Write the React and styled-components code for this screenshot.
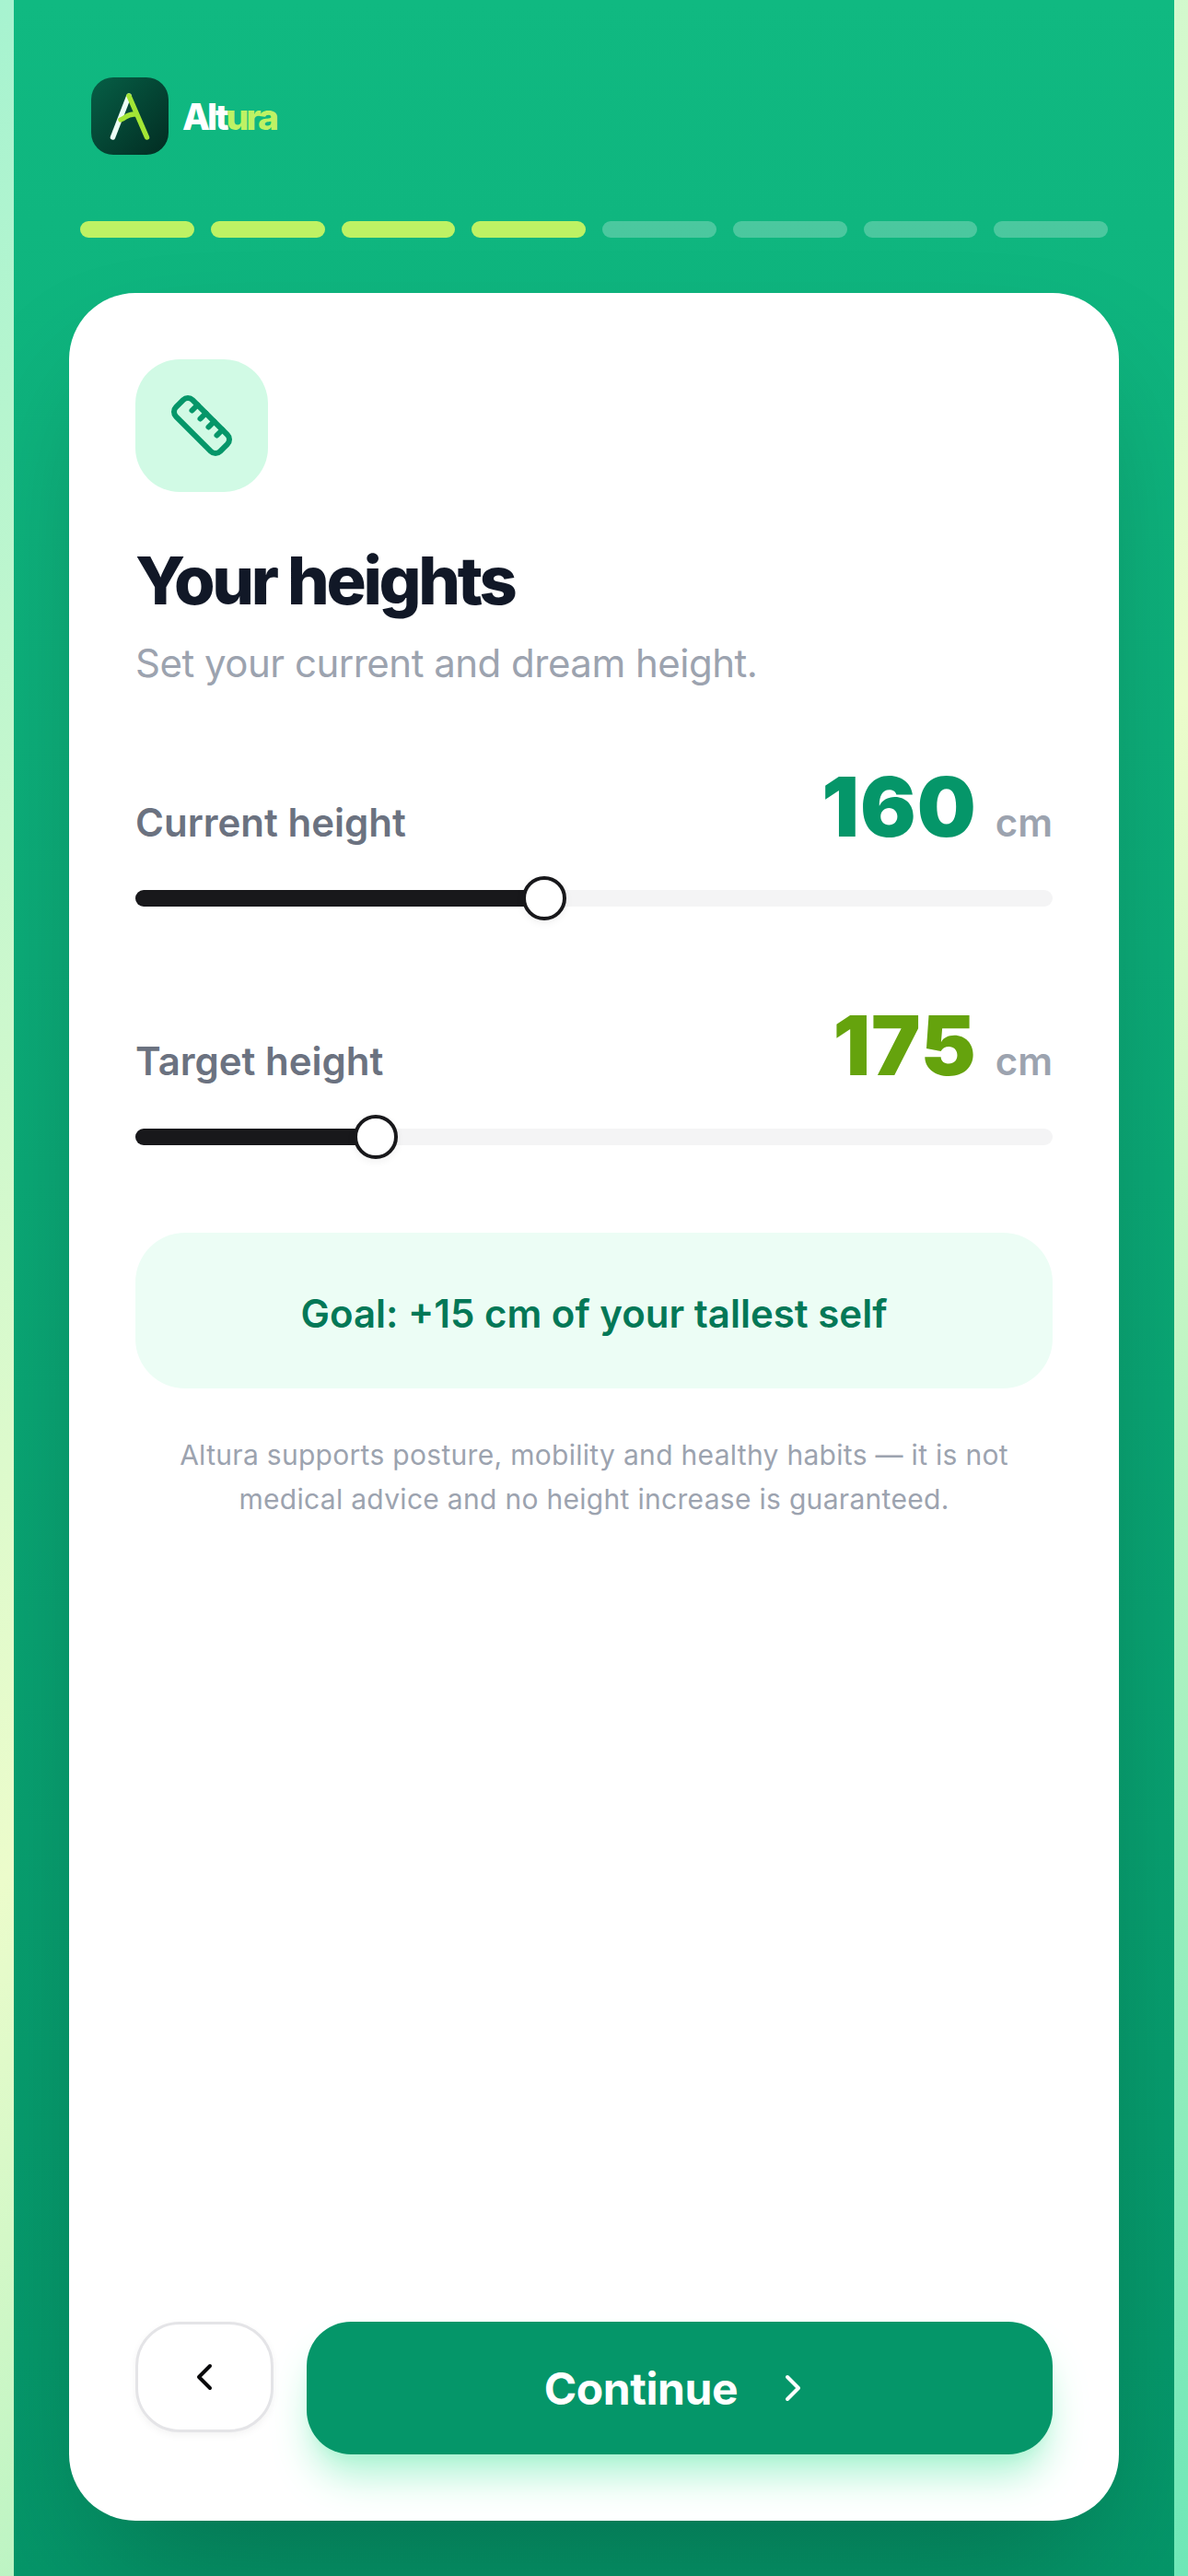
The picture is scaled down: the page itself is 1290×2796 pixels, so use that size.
import React from "react";
import styled, { createGlobalStyle } from "styled-components";
import { ChevronLeft, ChevronRight, Ruler } from "lucide-react";

const Global = createGlobalStyle`
  html, body { margin: 0; padding: 0; }
  body { font-family: Inter, "Noto Sans", sans-serif; -webkit-font-smoothing: antialiased; }
  * { box-sizing: border-box; }
`;

const Page = styled.div`
  width: 1290px;
  height: 2796px;
  padding: 0 15px;
  background: linear-gradient(135deg, #a7f3d0 0%, #ecfccb 50%, #6ee7b7 100%);
`;

const Panel = styled.main`
  height: 100%;
  display: flex;
  flex-direction: column;
  overflow: hidden;
  background: linear-gradient(180deg, #10b981 0%, #059669 100%);
`;

const Brand = styled.header`
  display: flex;
  align-items: center;
  gap: 15px;
  padding: 84px 84px 0;
`;

const LogoTile = styled.div`
  width: 84px;
  height: 84px;
  border-radius: 24px;
  overflow: hidden;
  background: linear-gradient(135deg, #065f46 0%, #022c22 100%);
  svg { display: block; }
`;

const Wordmark = styled.div`
  font-size: 39px;
  font-weight: 800;
  letter-spacing: -3px;
  color: #fff;
  span { color: #bef264; }
`;

const Progress = styled.div`
  display: flex;
  gap: 18px;
  padding: 0 72px;
  margin-top: 72px;
`;

const Segment = styled.div`
  flex: 1;
  height: 18px;
  border-radius: 9px;
  background: ${(p) => (p.$on ? "#bef264" : "rgba(255,255,255,0.25)")};
`;

const Card = styled.section`
  flex: 1;
  display: flex;
  flex-direction: column;
  margin: 60px 60px 60px;
  padding: 72px;
  border-radius: 72px;
  background: #fff;
  box-shadow: 0 75px 150px -36px rgba(0, 0, 0, 0.25);
`;

const IconTile = styled.div`
  width: 144px;
  height: 144px;
  border-radius: 48px;
  background: #d1fae5;
  color: #059669;
  display: flex;
  align-items: center;
  justify-content: center;
`;

const Title = styled.h1`
  margin: 51px 0 0;
  font-size: 72px;
  line-height: 90px;
  font-weight: 800;
  letter-spacing: -3.3px;
  color: #111827;
`;

const Subtitle = styled.p`
  margin: 15px 0 0;
  font-size: 42px;
  line-height: 60px;
  font-weight: 400;
  letter-spacing: -0.5px;
  color: #9ca3af;
`;

const Field = styled.div`
  margin-top: ${(p) => p.$gap}px;
`;

const FieldHead = styled.div`
  display: flex;
  align-items: baseline;
  justify-content: space-between;
`;

const Label = styled.span`
  font-size: 42px;
  font-weight: 600;
  color: #6b7280;
`;

const Reading = styled.span`
  display: inline-flex;
  align-items: baseline;
  gap: 20px;
`;

const Value = styled.span`
  font-size: 90px;
  line-height: 108px;
  font-weight: 900;
  letter-spacing: 1px;
  color: ${(p) => p.$color};
`;

const Unit = styled.span`
  font-size: 42px;
  font-weight: 600;
  color: #9ca3af;
`;

const Track = styled.div`
  position: relative;
  height: 18px;
  margin-top: 36px;
  border-radius: 9px;
  background: #f4f4f5;
`;

const Fill = styled.div`
  height: 100%;
  border-radius: 9px;
  background: #18181b;
`;

const Thumb = styled.div`
  position: absolute;
  top: 50%;
  width: 48px;
  height: 48px;
  border-radius: 50%;
  border: 4px solid #18181b;
  background: #fff;
  transform: translate(-50%, -50%);
  box-shadow: 0 3px 9px rgba(0, 0, 0, 0.06);
`;

const Goal = styled.div`
  margin-top: 95px;
  height: 169px;
  padding-top: 6px;
  border-radius: 54px;
  background: #ecfdf5;
  color: #047857;
  font-size: 42px;
  font-weight: 600;
  display: flex;
  align-items: center;
  justify-content: center;
`;

const Note = styled.p`
  margin: 48px 0 0;
  text-align: center;
  font-size: 30px;
  line-height: 48px;
  letter-spacing: 0.3px;
  color: #9ca3af;
`;

const Actions = styled.div`
  margin-top: auto;
  display: flex;
  align-items: flex-start;
  gap: 36px;
`;

const BackButton = styled.button`
  width: 150px;
  height: 120px;
  flex: none;
  padding: 0;
  border: 3px solid #e4e4e7;
  border-radius: 48px;
  background: #fff;
  color: #09090b;
  display: flex;
  align-items: center;
  justify-content: center;
  box-shadow: 0 3px 9px rgba(0, 0, 0, 0.05);
`;

const ContinueButton = styled.button`
  flex: 1;
  height: 144px;
  border: 0;
  border-radius: 48px;
  background: #059669;
  color: #fff;
  font-family: inherit;
  font-size: 48px;
  font-weight: 700;
  letter-spacing: -0.4px;
  display: flex;
  align-items: center;
  justify-content: center;
  gap: 36px;
  box-shadow: 0 30px 45px -9px #a7f3d0, 0 12px 18px -12px #a7f3d0;
`;

const sliders = [
  { label: "Current height", value: 160, pct: 44.6, color: "#059669", gap: 72 },
  { label: "Target height", value: 175, pct: 26.2, color: "#65a30d", gap: 97 },
];

export default function App() {
  return (
    <Page>
      <Global />
      <Panel>
        <Brand>
          <LogoTile>
            <svg width="84" height="84" viewBox="0 0 84 84" fill="none" strokeLinecap="round">
              <path d="M41 20 L23.5 65" stroke="#ecfdf5" strokeWidth="5.5" />
              <path d="M41 20 L60.5 65" stroke="#a3e635" strokeWidth="5.5" />
              <path d="M32 46 C38 44 39 39 48 40" stroke="#a3e635" strokeWidth="5.5" />
            </svg>
          </LogoTile>
          <Wordmark>
            Alt<span>ura</span>
          </Wordmark>
        </Brand>
        <Progress>
          {[0, 1, 2, 3, 4, 5, 6, 7].map((i) => (
            <Segment key={i} $on={i < 4} />
          ))}
        </Progress>
        <Card>
          <IconTile>
            <Ruler size={72} strokeWidth={2} />
          </IconTile>
          <Title>Your heights</Title>
          <Subtitle>Set your current and dream height.</Subtitle>
          {sliders.map((s) => (
            <Field key={s.label} $gap={s.gap}>
              <FieldHead>
                <Label>{s.label}</Label>
                <Reading>
                  <Value $color={s.color}>{s.value}</Value>
                  <Unit>cm</Unit>
                </Reading>
              </FieldHead>
              <Track>
                <Fill style={{ width: `${s.pct}%` }} />
                <Thumb style={{ left: `${s.pct}%` }} />
              </Track>
            </Field>
          ))}
          <Goal>Goal: +15 cm of your tallest self</Goal>
          <Note>
            Altura supports posture, mobility and healthy habits — it is not
            <br />
            medical advice and no height increase is guaranteed.
          </Note>
          <Actions>
            <BackButton aria-label="Back">
              <ChevronLeft size={48} strokeWidth={2} />
            </BackButton>
            <ContinueButton>
              Continue
              <ChevronRight size={48} strokeWidth={2} />
            </ContinueButton>
          </Actions>
        </Card>
      </Panel>
    </Page>
  );
}
